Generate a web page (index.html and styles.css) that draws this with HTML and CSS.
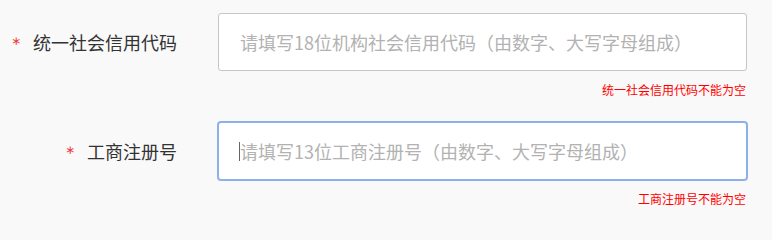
FILE: index.html
```html
<!DOCTYPE html>
<html lang="zh-CN">
<head>
<meta charset="utf-8">
<title>表单</title>
<link rel="stylesheet" href="styles.css">
</head>
<body>
<form class="form">
  <div class="row">
    <label class="label"><span class="req">∗</span>统一社会信用代码</label>
    <div class="field">
      <div class="input"><span class="placeholder">请填写18位机构社会信用代码（由数字、大写字母组成）</span></div>
      <div class="error">统一社会信用代码不能为空</div>
    </div>
  </div>
  <div class="row">
    <label class="label"><span class="req">∗</span>工商注册号</label>
    <div class="field">
      <div class="input focused"><span class="caret"></span><span class="placeholder">请填写13位工商注册号（由数字、大写字母组成）</span></div>
      <div class="error">工商注册号不能为空</div>
    </div>
  </div>
</form>
</body>
</html>
```
FILE: styles.css
```css
html, body {
  margin: 0;
  padding: 0;
  background: #f9f9f9;
}
body {
  font-family: "Noto Sans CJK SC", "Noto Sans", sans-serif;
  color: #333;
}
.form {
  padding-top: 13px;
  display: flex;
  flex-direction: column;
}
.row {
  display: grid;
  grid-template-columns: 177px 529px;
  column-gap: 41px;
  align-items: start;
}
.label {
  height: 58px;
  display: flex;
  align-items: center;
  justify-content: flex-end;
  font-size: 18px;
  line-height: 20px;
  color: #333;
}
.req {
  font-family: "DejaVu Sans", sans-serif;
  color: #f03c3c;
  font-size: 12px;
  margin-right: 12px;
  position: relative;
  top: -1px;
}
.field {
  display: flex;
  flex-direction: column;
}
.input {
  box-sizing: border-box;
  height: 58px;
  background: #fff;
  border: 1px solid #c6c6c6;
  border-radius: 3px;
  padding-left: 21px;
  display: flex;
  align-items: center;
  font-size: 18px;
  line-height: 20px;
}
.input.focused {
  border-color: #8eb0ea;
  box-shadow: 0 0 0 1px #8eb0ea;
}
.placeholder {
  color: #b2b2b2;
  white-space: nowrap;
}
.caret {
  width: 1px;
  height: 19px;
  background: #666;
  margin-left: -1px;
}
.error {
  margin-top: 10px;
  margin-bottom: 23px;
  text-align: right;
  font-size: 12px;
  line-height: 18px;
  color: #ff0000;
  padding-right: 1px;
}
```
